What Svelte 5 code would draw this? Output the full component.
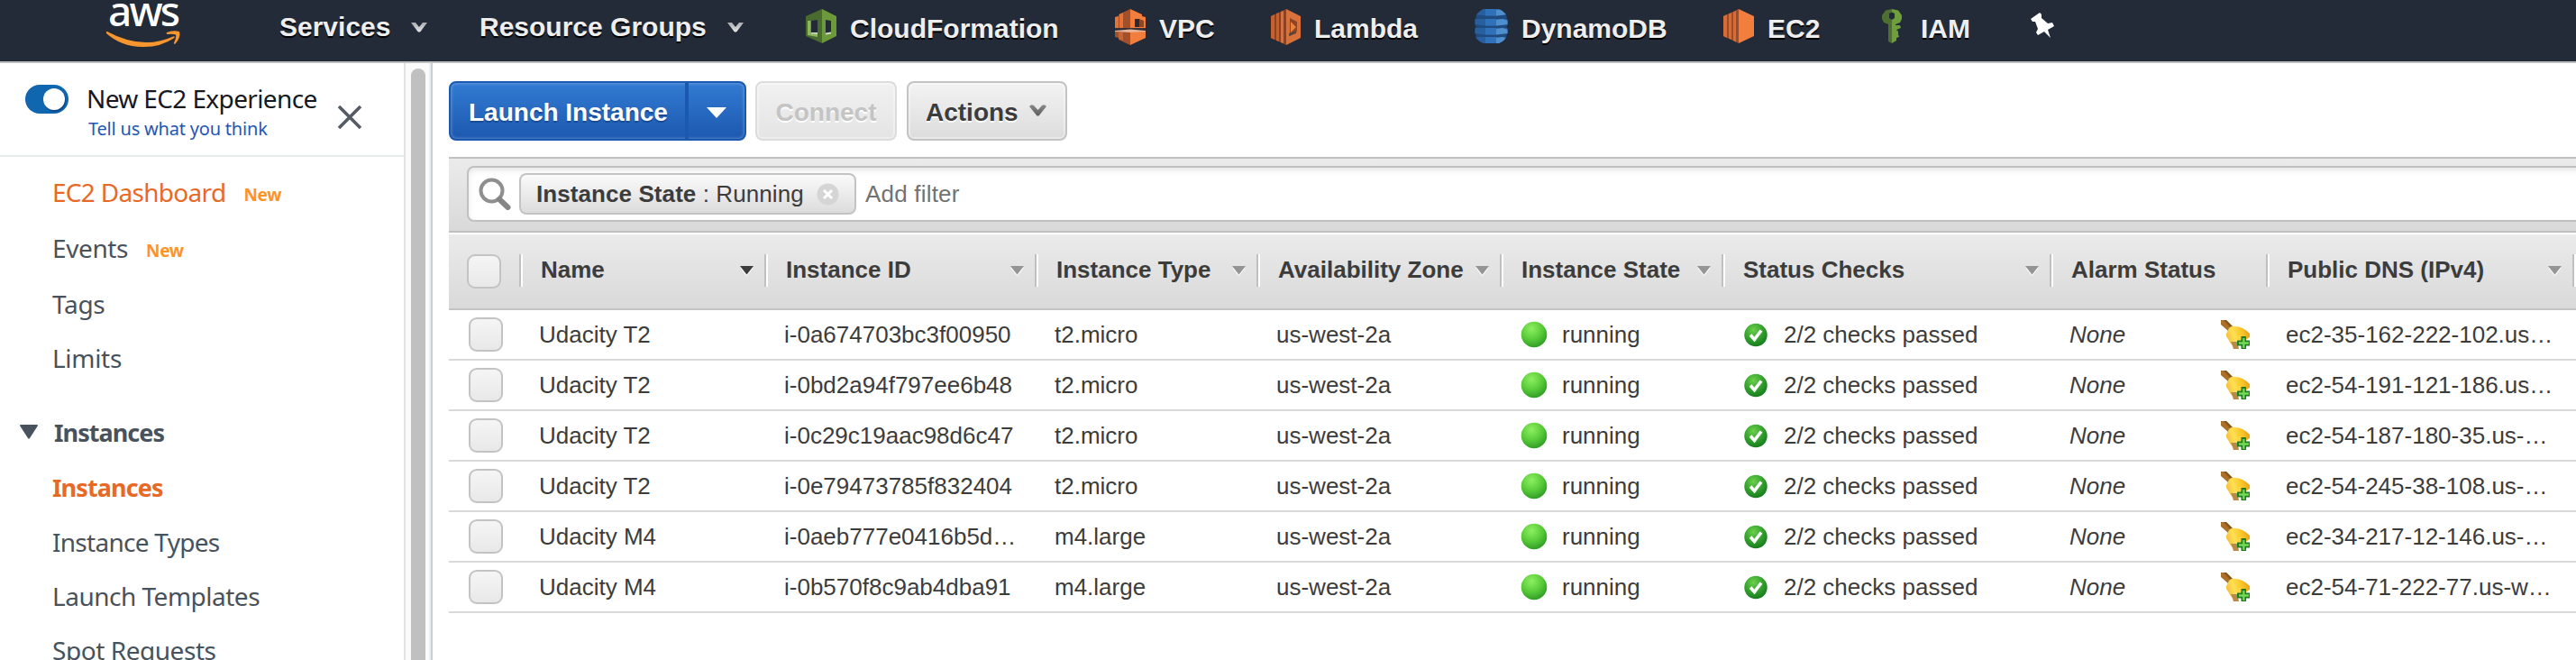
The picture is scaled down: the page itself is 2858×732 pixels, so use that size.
<script>
  const sections = [
    { label: 'EC2 Dashboard', kind: 'tall accent', isNew: true, ls: -0.7 },
    { label: 'Events', kind: 'tall', isNew: true, ls: -0.4 },
    { label: 'Tags', kind: 'odd', ls: -0.3 },
    { label: 'Limits', kind: '', ls: -0.3 },
    { label: 'Instances', kind: 'group', ls: -0.95 },
    { label: 'Instances', kind: 'odd accent strong', ls: -0.9 },
    { label: 'Instance Types', kind: '', ls: -0.72 },
    { label: 'Launch Templates', kind: '', ls: -0.5 },
    { label: 'Spot Requests', kind: '', ls: -0.45 }
  ];
  const columns = [
    { label: 'Name', arrow: 'dark' },
    { label: 'Instance ID', arrow: 'light' },
    { label: 'Instance Type', arrow: 'light' },
    { label: 'Availability Zone', arrow: 'light' },
    { label: 'Instance State', arrow: 'light' },
    { label: 'Status Checks', arrow: 'light' },
    { label: 'Alarm Status', arrow: '' },
    { label: 'Public DNS (IPv4)', arrow: 'light' }
  ];
  const rows = [
    ['Udacity T2', 'i-0a674703bc3f00950', 't2.micro', 'ec2-35-162-222-102.us…'],
    ['Udacity T2', 'i-0bd2a94f797ee6b48', 't2.micro', 'ec2-54-191-121-186.us…'],
    ['Udacity T2', 'i-0c29c19aac98d6c47', 't2.micro', 'ec2-54-187-180-35.us-…'],
    ['Udacity T2', 'i-0e79473785f832404', 't2.micro', 'ec2-54-245-38-108.us-…'],
    ['Udacity M4', 'i-0aeb777e0416b5d…', 'm4.large', 'ec2-34-217-12-146.us-…'],
    ['Udacity M4', 'i-0b570f8c9ab4dba91', 'm4.large', 'ec2-54-71-222-77.us-w…']
  ];
</script>

{#snippet chevron()}
  <svg class="chev" width="18" height="12" viewBox="0 0 18 12"><path d="M0 0H5L9 5L13 0H18L10.500 10Q9 11 7.500 10Z" fill="url(#chevfill)" /></svg>
{/snippet}

<svg class="defs" width="0" height="0" aria-hidden="true">
  <defs>
    <linearGradient id="chevfill" x1="0" y1="0" x2="0" y2="1">
      <stop offset="0" stop-color="#a9abae" /><stop offset="1" stop-color="#e6e6e6" />
    </linearGradient>
    <linearGradient id="actfill" x1="0" y1="0" x2="0" y2="1">
      <stop offset="0" stop-color="#8c8c8c" /><stop offset="1" stop-color="#5a5a5a" />
    </linearGradient>
    <radialGradient id="dot" cx="40%" cy="28%" r="75%">
      <stop offset="0" stop-color="#8df062" /><stop offset=".55" stop-color="#5acb3a" /><stop offset="1" stop-color="#2c9a24" />
    </radialGradient>
    <radialGradient id="ok" cx="40%" cy="28%" r="75%">
      <stop offset="0" stop-color="#6bd04a" /><stop offset=".55" stop-color="#34a12e" /><stop offset="1" stop-color="#137a1c" />
    </radialGradient>
    <linearGradient id="bell" x1="0" y1=".6" x2="1" y2=".3">
      <stop offset="0" stop-color="#f0b93c" /><stop offset=".35" stop-color="#ffe052" /><stop offset=".7" stop-color="#fbc527" /><stop offset="1" stop-color="#e5a11c" />
    </linearGradient>
    <clipPath id="barrel"><path d="M10 0H27Q36 4 36.500 12V27Q35 35 27 38H10Q1 35 .5 27V12Q1 4 10 0Z" /></clipPath>
  </defs>
</svg>

<div class="page">
  <header>
    <div class="logo">
      <span>aws</span>
      <svg width="82" height="19" viewBox="0 0 82 19">
        <path d="M1 1Q40 22 74 6.500Q76.500 5.500 75.500 8Q60 18.500 40 18Q16 17.500 0 3Q-1 0 1 1Z" fill="#f7952f" />
        <path d="M67 2Q74-1 81 1Q83 7 76.500 14.500Q74.500 15.500 75 13.500Q78 7 77 4.500Q74 3.500 68 4Q66 3.500 67 2Z" fill="#f7952f" />
      </svg>
    </div>
    <nav>
      <div class="menu"><span>Services</span>{@render chevron()}</div>
      <div class="menu groups"><span>Resource Groups</span>{@render chevron()}</div>
      <div class="svc">
        <svg width="34" height="40" viewBox="0 0 34 40">
          <path d="M18 0L0 8V30L18 38Z" fill="#4a6b2f" /><path d="M18 0L34 8V30L18 38Z" fill="#6c9a3b" />
          <path d="M2 13H5.500V26L13 28V31L2 29Z" fill="#8bb95a" />
          <path d="M6 13L13 12V28L6 27Z" fill="#222a38" /><path d="M22 12L28 13V27L22 28Z" fill="#222a38" />
          <path d="M6 26H13V28L6 27.500ZM22 26.500L28 25.500V27.500L22 28.500Z" fill="#cfdcc2" />
        </svg>
        <span>CloudFormation</span>
      </div>
      <div class="svc">
        <svg width="34" height="40" viewBox="0 0 34 40">
          <path d="M17 0L4 6V8L0 9V21H17Z" fill="#a3502a" /><path d="M17 0L30 6V8L34 9V21H17Z" fill="#f27e3e" />
          <path d="M0 9L4 8V21H0ZM5 6L9 4V21H5Z" fill="#e2733a" />
          <path d="M22 11H27V20H22Z" fill="#2a2a36" /><path d="M27 11L32 13V20H27Z" fill="#8d4524" />
          <path d="M0 21H34V22.500H0Z" fill="#3a3038" /><path d="M0 24L17 22.500L34 24V26H0Z" fill="#e9b295" />
          <path d="M0 25L17 26V40L4 34V32L0 31Z" fill="#a3502a" /><path d="M4 26H9V35L4 33Z" fill="#c96433" /><path d="M34 25L17 26V40L34 32Z" fill="#f27e3e" />
        </svg>
        <span>VPC</span>
      </div>
      <div class="svc">
        <svg width="33" height="40" viewBox="0 0 33 40">
          <path d="M17 0L0 8V32L17 40Z" fill="#8f4222" /><path d="M17 0L33 8V32L17 40Z" fill="#d9713a" />
          <path d="M0 8L4 6V34L0 32ZM6 5L9 4V36L6 35Z" fill="#c4622f" /><path d="M11 3L14 2V38L11 37Z" fill="#d9713a" />
          <path d="M21 10L29 14V25L21 30Z" fill="#8d4524" /><path d="M22 14L28 20L22 26Z" fill="#e8823f" /><path d="M20 27L28 25V27L20 30Z" fill="#5a4438" />
        </svg>
        <span>Lambda</span>
      </div>
      <div class="svc">
        <svg width="37" height="38" viewBox="0 0 37 38">
          <g clip-path="url(#barrel)">
            <path d="M0 0H37V38H0Z" fill="#1f4b80" />
            {#each [0, 11, 21, 31] as y, i}
              <path d="M0 {y}H37V{y + 6}Q18 {y + 9} 0 {y + 6}Z" fill="#285f9f" />
              <path d="M12 {y}H24V{y + 7.5}H12Z" fill="#2f72ba" />
              <path d="M24 {y + 1}L31 {y}L37 {y + 2}V{y + 6}L24 {y + 7.5}Z" fill="#4f8fce" />
            {/each}
          </g>
          <path d="M0 8.500L2 10L0 11.500ZM0 18.500L2 20L0 21.500ZM0 28L2 29.500L0 31ZM37 8.500L35 10L37 11.500ZM37 18.500L35 20L37 21.500ZM37 28L35 29.500L37 31Z" fill="#232a38" />
        </svg>
        <span>DynamoDB</span>
      </div>
      <div class="svc">
        <svg width="34" height="40" viewBox="0 0 34 40">
          <path d="M17 0L0 8V30L17 38Z" fill="#9b4c28" /><path d="M17 0L34 8V30L17 38Z" fill="#f27e3e" />
          <path d="M0 8L4 6V32L0 30ZM6 5.500L9 4V34L6 32.500ZM11 3.500L14 2V36.500L11 35Z" fill="#d66c37" />
        </svg>
        <span>EC2</span>
      </div>
      <div class="svc iam">
        <svg width="23" height="40" viewBox="0 0 23 40">
          <path d="M11 0L4 1.500L0 7V11L2 15L7 17V36L11 38Z" fill="#4d7030" />
          <path d="M11 0L18 1.500L22 7V11L20 15L15 17V18H20L21 21L16 23L18 25V28L19 31L16 32V35L11 38Z" fill="#6f9e3c" />
          <path d="M8 5L11 3.500L14 5V10L11 12L8 10Z" fill="#222a38" />
        </svg>
        <span>IAM</span>
      </div>
      <svg class="pin" width="26" height="29" viewBox="0 0 26 29">
        <path d="M0 7L10 0L12 2L12 6L19 12L24 11L26 15L19 19L22 28L15 21L8 25L6 22L8 18L5 10L2 10Z" fill="#fff" />
      </svg>
    </nav>
  </header>

  <div class="body">
    <aside>
      <div class="experience">
        <div class="toggle"><i></i></div>
        <div class="words">
          <div class="title">New EC2 Experience</div>
          <div class="feedback">Tell us what you think</div>
        </div>
        <svg class="close" width="28" height="28" viewBox="0 0 28 28"><path d="M2 2L26 26M26 2L2 26" stroke="#545b64" stroke-width="3.600" /></svg>
      </div>
      <ul>
        {#each sections as s}
          <li class={s.kind}>
            {#if s.kind === 'group'}
              <svg class="tri" width="20" height="16" viewBox="0 0 20 16"><path d="M1 0H19Q20.500 0 19.700 1.500L11 15Q10 16.500 9 15L.3 1.500Q-.5 0 1 0Z" fill="#48525c" /></svg>
            {/if}
            <span style="letter-spacing:{s.ls}px">{s.label}</span>
            {#if s.isNew}<b class="new">New</b>{/if}
          </li>
        {/each}
      </ul>
    </aside>
    <div class="scroll"><div class="thumb"></div></div>

    <main>
      <div class="toolbar">
        <div class="btn launch">
          <span>Launch Instance</span>
          <div class="drop"><svg width="22" height="12" viewBox="0 0 22 12"><path d="M0 0H22L11 12Z" fill="#fff" /></svg></div>
        </div>
        <div class="btn connect">Connect</div>
        <div class="btn actions">
          <span>Actions</span>
          <svg width="19" height="13" viewBox="0 0 19 13"><path d="M0 2Q2-1 5 1L9.500 6L14 1Q17-1 19 2L10.500 12.500H8.500Z" fill="url(#actfill)" /></svg>
        </div>
      </div>

      <div class="filterbar">
        <div class="search">
          <svg class="glass" width="36" height="36" viewBox="0 0 36 36">
            <circle cx="14.500" cy="14.500" r="12" fill="none" stroke="#8f8f8f" stroke-width="4" />
            <path d="M23 24L32.500 33" stroke="#858585" stroke-width="6" stroke-linecap="round" />
          </svg>
          <div class="chip">
            <span class="tag"><b>Instance State</b> : Running</span>
            <svg width="25" height="25" viewBox="0 0 25 25"><circle cx="12.500" cy="12.500" r="12" fill="#d5d5d5" /><path d="M8 8L17 17M17 8L8 17" stroke="#fff" stroke-width="3" /></svg>
          </div>
          <span class="add">Add filter</span>
        </div>
      </div>

      <div class="grid head">
        <div class="pick"><i class="box"></i></div>
        {#each columns as c}
          <div class="th">
            <span>{c.label}</span>
            {#if c.arrow}
              <svg width="15" height="12" viewBox="0 0 15 12"><path d="M0 2H15L7.500 11.500Z" fill="#fff" opacity=".7" /><path d="M0 0H15L7.500 9.500Z" fill={c.arrow === 'dark' ? '#3c3c3c' : '#949494'} /></svg>
            {/if}
          </div>
        {/each}
        <div class="th"></div>
      </div>

      {#each rows as r}
        <div class="grid row">
          <div class="pick"><i class="box"></i></div>
          <div class="td">{r[0]}</div>
          <div class="td">{r[1]}</div>
          <div class="td">{r[2]}</div>
          <div class="td">us-west-2a</div>
          <div class="td state">
            <svg width="30" height="30" viewBox="0 0 30 30"><circle cx="15" cy="15" r="14.300" fill="url(#dot)" /></svg>
            <span>running</span>
          </div>
          <div class="td checks">
            <svg width="26" height="27" viewBox="0 0 26 27"><circle cx="13" cy="13.500" r="12.700" fill="url(#ok)" /><path d="M7 13.500L11.500 18.500L19 8.500" fill="none" stroke="#fff" stroke-width="3.600" /></svg>
            <span>2/2 checks passed</span>
          </div>
          <div class="td alarm">
            <em>None</em>
            <svg width="32" height="32" viewBox="0 0 32 32">
              <path d="M0 0H6L13 7L8 12L0 5Z" fill="#a9712a" /><path d="M3 0H6L13 7L11 9Z" fill="#8a5518" />
              <path d="M8 11Q10 6 16 7Q24 7 32 15V19L15 31Q10 26 8 21Q5 17 6 15Z" fill="url(#bell)" />
              <path d="M11 24Q13 28 14 32H20L18 24Z" fill="#b98a45" />
              <path d="M22.500 18H28V22.500H32V28.500H28V32H22.500V28.500H18V22.500H22.500Z" fill="#1e7d22" />
              <path d="M24.200 20H26.500V24.300H31V26.700H26.500V31H24.200V26.700H20V24.300H24.200Z" fill="#74d957" />
            </svg>
          </div>
          <div class="td">{r[3]}</div>
          <div class="td"></div>
        </div>
      {/each}
    </main>
  </div>
</div>

<style>
  :global(body) { background: #fff; }
  .defs { position: absolute; }
  .page { width: 2858px; height: 732px; overflow: hidden; display: flex; flex-direction: column; font-family: "Liberation Sans", Arial, sans-serif; color: #3c3c3c; }
  .page * { box-sizing: border-box; }
  svg { display: block; flex: none; }
  header { height: 70px; flex: none; background: #232a38; border-bottom: 2px solid #bdbfc1; display: flex; }
  .logo { width: 310px; flex: none; padding-left: 118px; height: 68px; }
  .logo span { display: block; height: 34px; padding-left: 2px; font: 500 46px/23px "Noto Sans", sans-serif; letter-spacing: -2.8px; color: #fff; }
  nav { display: grid; grid-template-columns: 222px 362px 343px 173px 226px 276px 176px 165px 26px; align-items: start; font-size: 30px; font-weight: bold; color: #eee; white-space: nowrap; text-shadow: 0 2px 0 #000; }
  .menu { display: flex; align-items: center; height: 60px; gap: 23px; }
  .menu .chev { margin-top: 2px; }
  .svc { display: flex; gap: 15px; height: 63px; line-height: 63px; }
  .svc svg { margin-top: 10px; }
  .iam { gap: 20px; }
  .pin { margin-top: 14px; }
  .body { display: flex; flex: 1; min-height: 0; }
  aside { width: 448px; flex: none; overflow: hidden; font-family: "Noto Sans", "Open Sans", sans-serif; }
  .experience { height: 104px; border-bottom: 2px solid #e6ebeb; display: flex; padding-left: 28px; white-space: nowrap; }
  .toggle { width: 48px; height: 32px; border-radius: 16px; background: #1166b0; margin-top: 24px; padding: 4px 0 0 20px; flex: none; }
  .toggle i { display: block; width: 24px; height: 24px; border-radius: 50%; background: #fff; box-shadow: 1px 2px 1px #0b4a86; }
  .words { width: 278px; margin-left: 20px; padding-top: 20px; flex: none; }
  .title { font-size: 28px; line-height: 38px; color: #16191f; letter-spacing: -.62px; }
  .feedback { font-size: 20px; line-height: 28px; margin-top: 1px; padding-left: 2px; color: #1f57b5; letter-spacing: -.2px; }
  .close { margin-top: 46px; }
  ul { list-style: none; margin: 8px 0 0; padding: 0; font-size: 28px; color: #48525c; white-space: nowrap; }
  li { height: 60px; padding-left: 58px; display: flex; align-items: center; }
  li.tall { height: 62px; }
  li.odd { height: 61px; }
  li.group { height: 62px; margin-top: 21px; padding-left: 22px; font-weight: bold; font-size: 27px; gap: 18px; }
  .accent { color: #e86825; }
  li.strong { font-weight: bold; font-size: 27px; }
  .new { font-size: 19px; letter-spacing: -.3px; color: #ff9229; margin: 6px 0 0 20px; }
  .scroll { width: 32px; flex: none; background: #fafafa; border-left: 2px solid #e3e3e3; border-right: 2px solid #c9ced3; padding: 6px 0 0 6px; box-shadow: inset -2px 0 #eceeef; }
  .thumb { width: 16px; height: 680px; border-radius: 8px; background: #c0c0c0; }
  main { flex: 1; min-width: 0; padding: 20px 0 0 18px; overflow: hidden; }
  .toolbar { display: flex; height: 66px; margin-bottom: 18px; font-size: 28px; font-weight: bold; white-space: nowrap; }
  .btn { height: 66px; border: 2px solid #c3c3c3; border-radius: 8px; background: linear-gradient(#f3f3f3, #dcdcdc); display: flex; align-items: center; padding-top: 3px; text-shadow: 0 2px 0 #fff; box-shadow: inset 0 0 0 2px rgba(255, 255, 255, .35); }
  .launch { width: 330px; background: linear-gradient(#327bd2, #1d58b0); border-color: #1b59b0; color: #fff; padding: 0 0 0 20px; box-shadow: inset 0 0 3px 1px rgba(255, 255, 255, .25); text-shadow: 0 2px 1px #174a94; justify-content: space-between; }
  .launch span { padding-top: 3px; }
  .drop { width: 66px; height: 62px; border-left: 4px solid #1b59b0; display: flex; align-items: center; padding: 4px 0 0 20px; }
  .connect { width: 157px; margin-left: 10px; justify-content: center; color: #c4c4c4; border-color: #dcdcdc; background: linear-gradient(#f1f1f1, #e4e4e4); }
  .actions { width: 178px; margin-left: 11px; padding-left: 19px; gap: 12px; }
  .actions svg { margin-bottom: 5px; }
  .filterbar { height: 84px; border-top: 2px solid #c0c0c0; border-bottom: 2px solid #c0c0c0; background: linear-gradient(#ebebeb, #d9d9d9); padding: 8px 0 0 20px; font-size: 26px; }
  .search { height: 62px; margin-right: -12px; border: 2px solid #c0c0c0; border-radius: 8px 0 0 8px; background: #fff; box-shadow: inset 0 3px 6px rgba(0, 0, 0, .1); display: flex; align-items: center; padding-left: 11px; white-space: nowrap; }
  .chip { width: 374px; height: 46px; margin-left: 9px; border: 2px solid #c3c3c3; border-radius: 8px; background: linear-gradient(#fafafa, #dcdcdc); display: flex; align-items: center; padding-left: 17px; gap: 14px; }
  .tag { letter-spacing: .08px; }
  .add { margin-left: 10px; color: #727272; letter-spacing: .2px; }
  .grid { display: grid; grid-template-columns: 78px 272px 300px 246px 270px 246px 364px 240px 340px 4px; font-size: 26px; white-space: nowrap; }
  .head { height: 86px; border-top: 2px solid #fff; border-bottom: 2px solid #c3c3c3; background: linear-gradient(#ebebeb, #d9d9d9); font-weight: bold; align-items: center; }
  .th { height: 36px; border-left: 2px solid #c0c0c0; box-shadow: inset 2px 0 #fff; margin-bottom: 2px; padding: 0 10px 2px 22px; display: flex; align-items: center; justify-content: space-between; }
  .th svg { margin-top: 4px; margin-right: 2px; }
  .box { display: block; width: 38px; height: 38px; border: 2px solid #c3c3c3; border-radius: 9px; background: linear-gradient(#f5f5f5, #e8e8e8); }
  .head .pick { padding-left: 20px; }
  .row { height: 56px; border-bottom: 2px solid #d9d9d9; align-items: center; }
  .row .pick { padding-left: 22px; }
  .td { padding-left: 22px; display: flex; align-items: center; overflow: hidden; }
  .state { padding-left: 23px; gap: 16px; }
  .checks { padding-left: 25px; gap: 18px; }
  .alarm { justify-content: space-between; padding-right: 18px; }
</style>
